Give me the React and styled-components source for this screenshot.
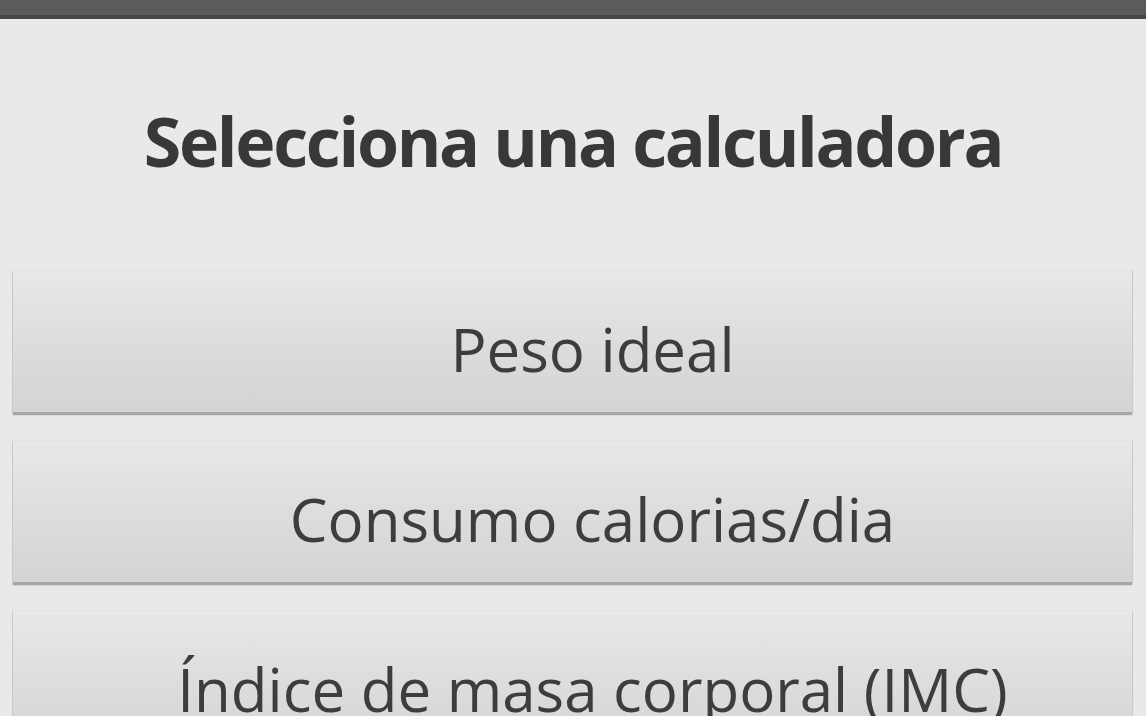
import React from "react";
import styled, { createGlobalStyle } from "styled-components";

const Global = createGlobalStyle`
  html, body { margin: 0; padding: 0; background: #ebe9e7; }
  body { overflow: hidden; font-family: "Open Sans", "Noto Sans", sans-serif; }
`;

const Screen = styled.div`
  width: 1146px;
  height: 716px;
  overflow: hidden;
  background: #ebe9e7;
  display: flex;
  flex-direction: column;
`;

const StatusBar = styled.div`
  height: 15px;
  background: #5b5b5a;
  border-bottom: 4px solid #464645;
  flex: none;
`;

const Header = styled.div`
  height: 251px;
  flex: none;
  display: flex;
  align-items: center;
  justify-content: center;
  box-sizing: border-box;
  padding-bottom: 8px;
`;

const Title = styled.h1`
  margin: 0;
  font-family: "Open Sans", "Noto Sans", sans-serif;
  font-weight: 700;
  font-size: 68px;
  color: #383838;
  letter-spacing: -2.3px;
`;

const List = styled.div`
  display: flex;
  flex-direction: column;
  gap: 25px;
  padding: 0 13px 0 12px;
`;

const CalcButton = styled.button`
  height: 145px;
  flex: none;
  box-sizing: border-box;
  border: none;
  border-left: 1px solid #c9c9c8;
  border-right: 1px solid #c9c9c8;
  border-top: 1px solid #e2e2e1;
  border-bottom: 3px solid #a7a7a6;
  border-radius: 2px;
  background: linear-gradient(to bottom, #e8e8e7 0%, #dddddc 50%, #d4d4d3 100%);
  box-shadow: 0 1px 1px rgba(0, 0, 0, 0.08);
  display: flex;
  align-items: center;
  justify-content: center;
  padding: 14px 0 0 40px;
  font-family: "Open Sans", "Noto Sans", sans-serif;
  font-size: 60px;
  color: #3d3d3d;
  white-space: nowrap;
  cursor: pointer;
`;

const items = ["Peso ideal", "Consumo calorias/dia", "Índice de masa corporal (IMC)"];

export default function App() {
  return (
    <Screen>
      <Global />
      <StatusBar />
      <Header>
        <Title>Selecciona una calculadora</Title>
      </Header>
      <List>
        {items.map((t) => (
          <CalcButton key={t}>{t}</CalcButton>
        ))}
      </List>
    </Screen>
  );
}
